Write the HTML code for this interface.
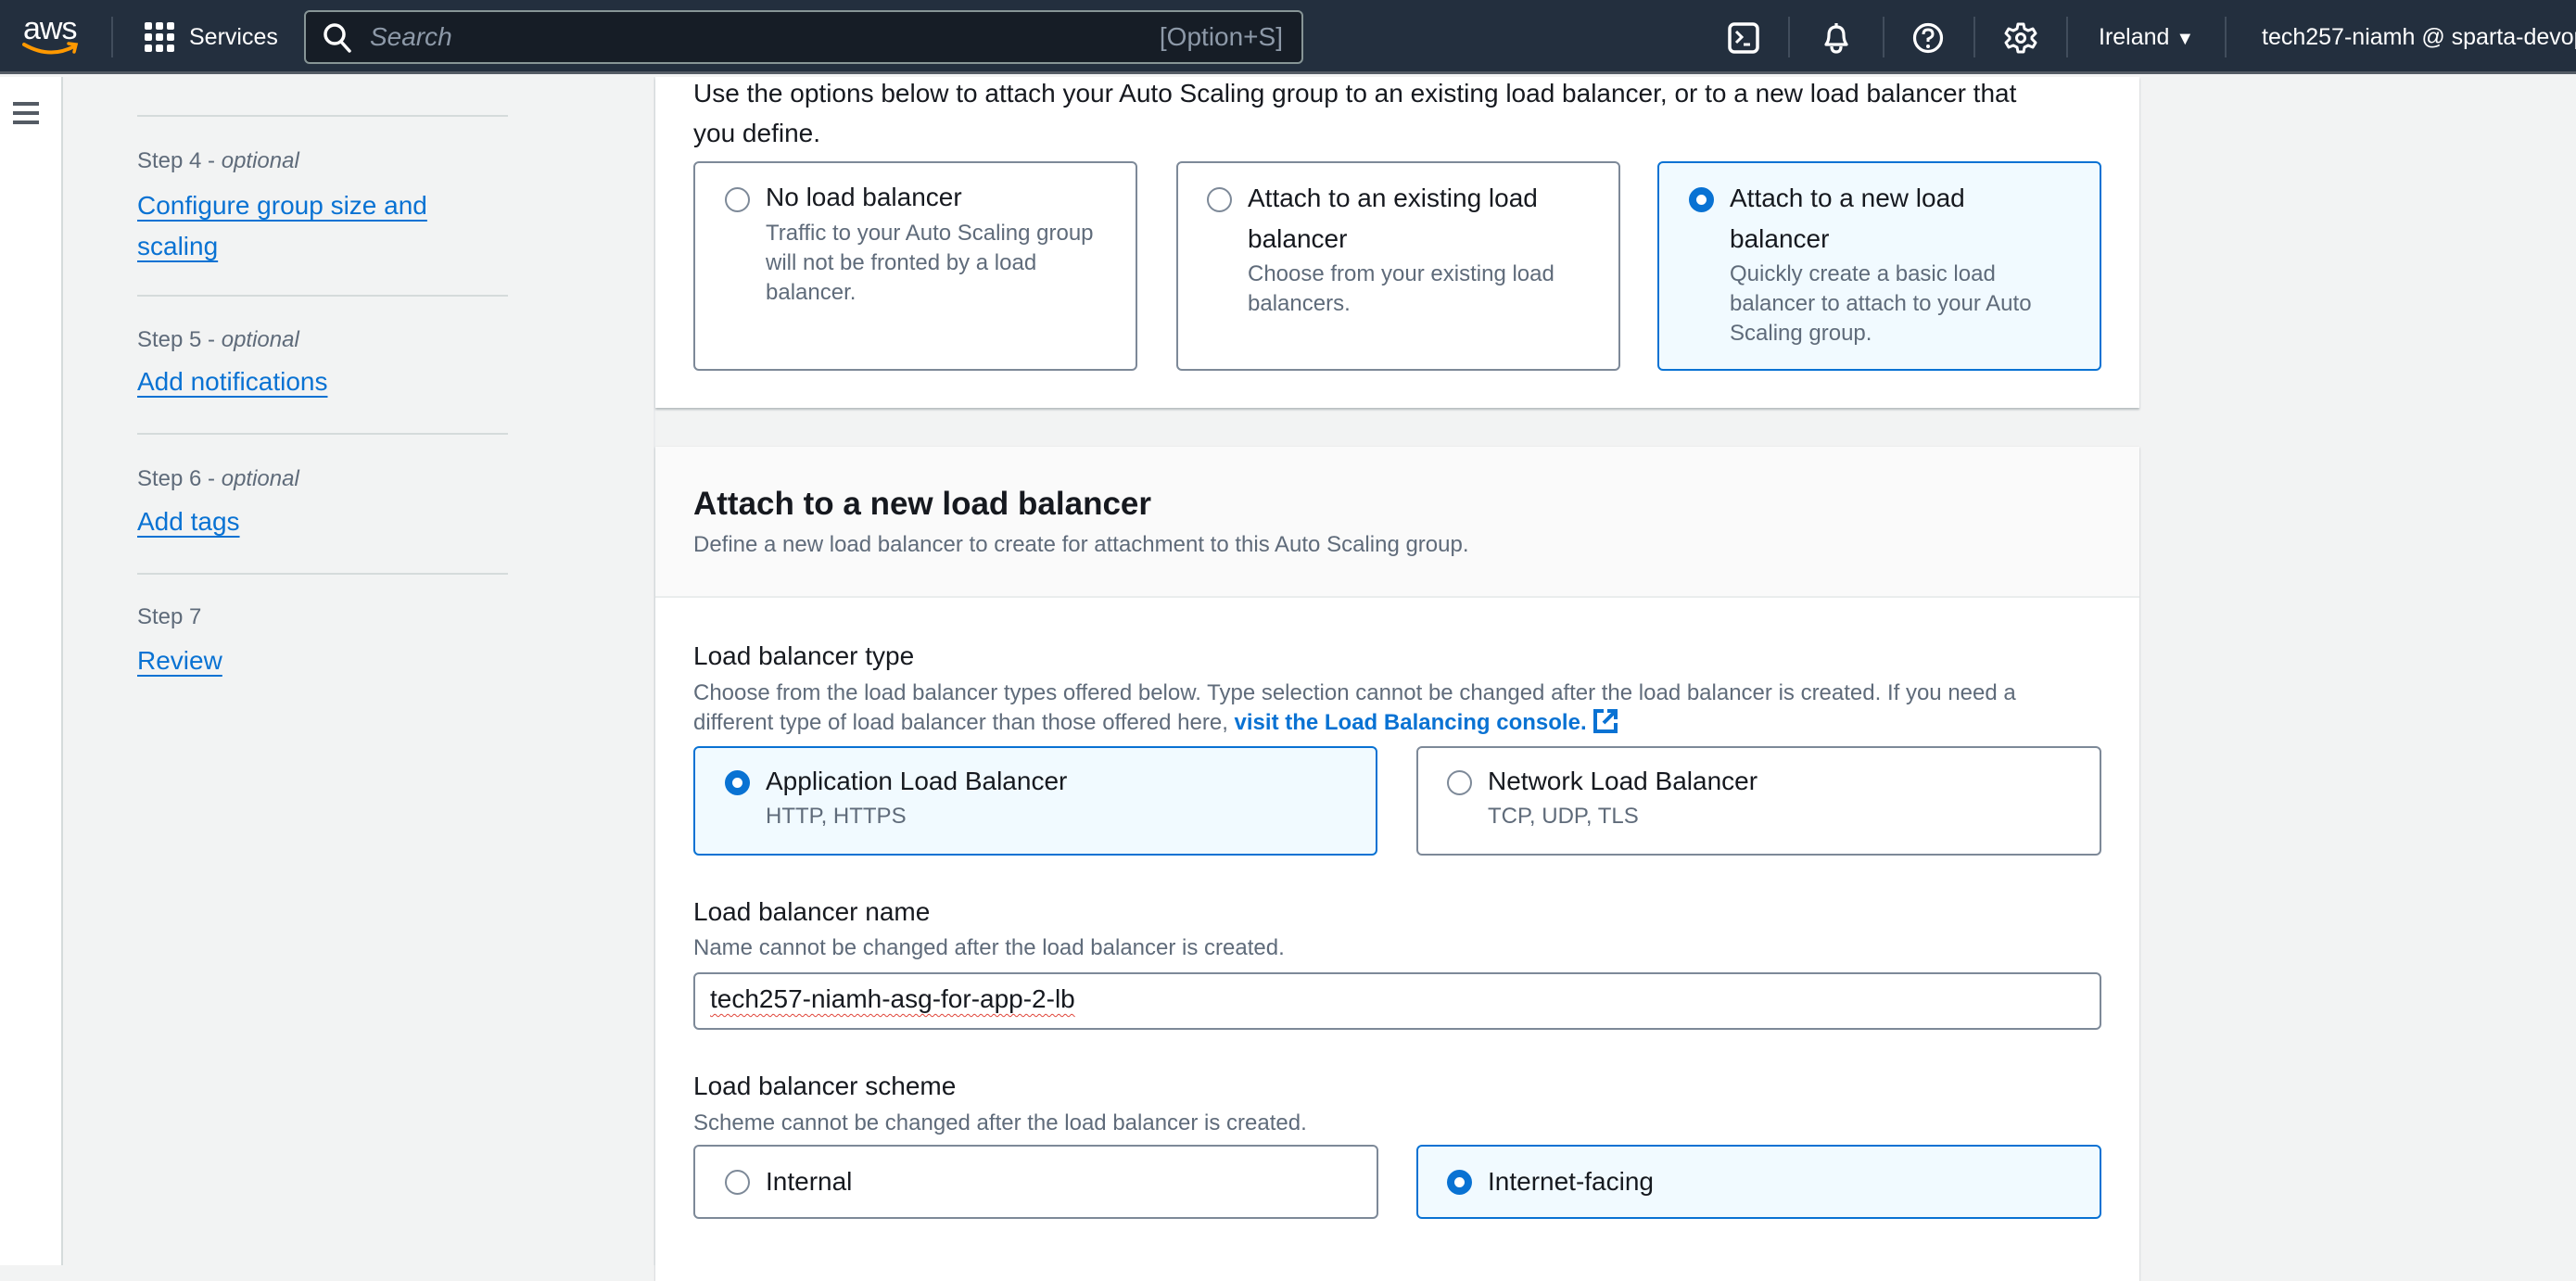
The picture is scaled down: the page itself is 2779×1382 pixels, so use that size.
<!DOCTYPE html>
<html><head><meta charset="utf-8">
<style>
*{margin:0;padding:0;box-sizing:border-box}
body{width:2779px;height:1365px;overflow:hidden;background:#f2f3f3;font-family:"Liberation Sans",sans-serif;position:relative;color:#16191f}
.a{position:absolute;white-space:nowrap}
#hdr{position:absolute;left:0;top:0;width:2779px;height:80px;background:#232f3e;border-bottom:3px solid #545b64}
.sep{position:absolute;top:18px;width:2px;height:44px;background:#414d5c}
.w{color:#fff;font-size:25px}
.tile{position:absolute;border:2px solid #7d8998;border-radius:6px;background:#fff}
.tile.s{border-color:#0972d3;background:#f1faff}
.rad{position:absolute;width:27px;height:27px;border-radius:50%;border:2px solid #7d8998;background:#fff}
.rad.s{border:8px solid #0972d3}
.t{font-size:28px;color:#16191f}
.d{font-size:24px;color:#5f6b7a;line-height:32px}
.lnk{color:#0972d3;font-size:28px;text-decoration:underline;text-decoration-thickness:2px;text-underline-offset:6px}
.stp{font-size:24px;color:#5f6b7a}
.div{position:absolute;left:148px;width:400px;height:2px;background:#d5dbdb}
</style></head><body>
<div id="hdr">
  <div class="a" style="left:25px;top:14px;color:#fff;font-size:34px;letter-spacing:-1px;line-height:34px">aws</div>
  <svg class="a" style="left:24px;top:44px" width="64" height="18" viewBox="0 0 64 18"><path d="M2 4 Q30 20 56 6" stroke="#ff9900" stroke-width="4" fill="none" stroke-linecap="round"/><path d="M50 3 L58 4 L56 12" stroke="#ff9900" stroke-width="3.5" fill="none" stroke-linecap="round"/></svg>
  <div class="sep" style="left:120px"></div>
  <svg class="a" style="left:156px;top:24px" width="32" height="32"><g fill="#fff"><rect x="0" y="0" width="8" height="8" rx="2"/><rect x="12" y="0" width="8" height="8" rx="2"/><rect x="24" y="0" width="8" height="8" rx="2"/><rect x="0" y="12" width="8" height="8" rx="2"/><rect x="12" y="12" width="8" height="8" rx="2"/><rect x="24" y="12" width="8" height="8" rx="2"/><rect x="0" y="24" width="8" height="8" rx="2"/><rect x="12" y="24" width="8" height="8" rx="2"/><rect x="24" y="24" width="8" height="8" rx="2"/></g></svg>
  <div class="a w" style="left:204px;top:25px;line-height:30px">Services</div>
  <div class="a" style="left:328px;top:11px;width:1078px;height:58px;background:#161d26;border:2px solid #879596;border-radius:6px"></div>
  <svg class="a" style="left:348px;top:24px" width="32" height="34"><circle cx="13" cy="13" r="10" stroke="#fff" stroke-width="3.5" fill="none"/><path d="M20 21 L29 31" stroke="#fff" stroke-width="3.5" stroke-linecap="round"/></svg>
  <div class="a" style="left:399px;top:25px;font-size:28px;font-style:italic;color:#8d99a8;line-height:30px">Search</div>
  <div class="a" style="right:1395px;top:25px;font-size:28px;color:#8d99a8;line-height:30px">[Option+S]</div>
  <svg class="a" style="left:1864px;top:24px" width="34" height="34"><rect x="2" y="2" width="30" height="30" rx="5" stroke="#fff" stroke-width="3.5" fill="none"/><path d="M9 10 L15 16 L9 22 M17 24 H24" stroke="#fff" stroke-width="3" fill="none"/></svg>
  <div class="sep" style="left:1929px"></div>
  <svg class="a" style="left:1964px;top:22px" width="34" height="36"><path d="M17 3 V6 M6 26 Q9 22 9 16 Q9 7 17 7 Q25 7 25 16 Q25 22 28 26 Z M12 28 Q12 34 17 34 Q22 34 22 28" stroke="#fff" stroke-width="3.2" fill="none" stroke-linejoin="round"/></svg>
  <div class="sep" style="left:2031px"></div>
  <svg class="a" style="left:2063px;top:24px" width="34" height="34"><circle cx="17" cy="17" r="14.5" stroke="#fff" stroke-width="3.2" fill="none"/><path d="M12 13 Q12 8 17 8 Q22 8 22 13 Q22 16 17 18 V21" stroke="#fff" stroke-width="3" fill="none"/><circle cx="17" cy="26" r="2" fill="#fff"/></svg>
  <div class="sep" style="left:2129px"></div>
  <svg class="a" style="left:2162px;top:23px" width="36" height="36" viewBox="0 0 36 36"><path d="M15 3 H21 L22 8 L26 10 L31 8 L34 13 L30 17 V19 L34 23 L31 28 L26 26 L22 28 L21 33 H15 L14 28 L10 26 L5 28 L2 23 L6 19 V17 L2 13 L5 8 L10 10 L14 8 Z" stroke="#fff" stroke-width="3" fill="none" stroke-linejoin="round"/><circle cx="18" cy="18" r="4.5" stroke="#fff" stroke-width="3" fill="none"/></svg>
  <div class="sep" style="left:2229px"></div>
  <div class="a w" style="left:2264px;top:25px;line-height:30px">Ireland <span style="font-size:20px">▼</span></div>
  <div class="sep" style="left:2400px"></div>
  <div class="a w" style="left:2440px;top:25px;line-height:30px">tech257-niamh @ sparta-devops</div>
</div>

<div class="a" style="left:0;top:83px;width:68px;height:1282px;background:#fff;border-right:2px solid #d5dbdb"></div>
<div class="a" style="left:14px;top:110px;width:28px;height:4px;background:#545b64"></div>
<div class="a" style="left:14px;top:120px;width:28px;height:4px;background:#545b64"></div>
<div class="a" style="left:14px;top:130px;width:28px;height:4px;background:#545b64"></div>

<div class="a" style="left:70px;top:83px;width:637px;height:1282px;background:#f2f3f3;border-right:2px solid #e9ebed"></div>
<div class="div" style="top:124px"></div>
<div class="a stp" style="left:148px;top:160px">Step 4 - <i>optional</i></div>
<div class="a lnk" style="left:148px;top:200px;line-height:44px">Configure group size and<br>scaling</div>
<div class="div" style="top:318px"></div>
<div class="a stp" style="left:148px;top:353px">Step 5 - <i>optional</i></div>
<div class="a lnk" style="left:148px;top:396px">Add notifications</div>
<div class="div" style="top:467px"></div>
<div class="a stp" style="left:148px;top:503px">Step 6 - <i>optional</i></div>
<div class="a lnk" style="left:148px;top:547px">Add tags</div>
<div class="div" style="top:618px"></div>
<div class="a stp" style="left:148px;top:652px">Step 7</div>
<div class="a lnk" style="left:148px;top:697px">Review</div>

<div class="a" style="left:707px;top:83px;width:1601px;height:357px;background:#fff;box-shadow:0 2px 2px rgba(0,28,36,.25)"></div>
<div class="a t" style="left:748px;top:79px;line-height:43px">Use the options below to attach your Auto Scaling group to an existing load balancer, or to a new load balancer that<br>you define.</div>

<div class="tile" style="left:748px;top:174px;width:479px;height:226px"></div>
<div class="rad" style="left:782px;top:202px"></div>
<div class="a t" style="left:826px;top:197px">No load balancer</div>
<div class="a d" style="left:826px;top:236px">Traffic to your Auto Scaling group<br>will not be fronted by a load<br>balancer.</div>

<div class="tile" style="left:1269px;top:174px;width:479px;height:226px"></div>
<div class="rad" style="left:1302px;top:202px"></div>
<div class="a t" style="left:1346px;top:192px;line-height:44px">Attach to an existing load<br>balancer</div>
<div class="a d" style="left:1346px;top:280px">Choose from your existing load<br>balancers.</div>

<div class="tile s" style="left:1788px;top:174px;width:479px;height:226px"></div>
<div class="rad s" style="left:1822px;top:202px"></div>
<div class="a t" style="left:1866px;top:192px;line-height:44px">Attach to a new load<br>balancer</div>
<div class="a d" style="left:1866px;top:280px">Quickly create a basic load<br>balancer to attach to your Auto<br>Scaling group.</div>

<div class="a" style="left:707px;top:482px;width:1601px;height:900px;background:#fff;box-shadow:0 1px 2px rgba(0,28,36,.25)"></div>
<div class="a" style="left:707px;top:482px;width:1601px;height:163px;background:#fafafa;border-bottom:2px solid #eaeded"></div>
<div class="a" style="left:748px;top:523px;font-size:35px;font-weight:bold;line-height:42px">Attach to a new load balancer</div>
<div class="a d" style="left:748px;top:572px">Define a new load balancer to create for attachment to this Auto Scaling group.</div>

<div class="a t" style="left:748px;top:692px">Load balancer type</div>
<div class="a d" style="left:748px;top:732px">Choose from the load balancer types offered below. Type selection cannot be changed after the load balancer is created. If you need a<br>different type of load balancer than those offered here, <span style="color:#0972d3;font-weight:bold">visit the Load Balancing console.</span> <svg width="28" height="28" viewBox="0 0 28 28" style="vertical-align:-5px"><path d="M12 3 H3 V25 H25 V16" stroke="#0972d3" stroke-width="4" fill="none"/><path d="M16 3 H25 V12 M25 3 L12 16" stroke="#0972d3" stroke-width="4" fill="none"/></svg></div>

<div class="tile s" style="left:748px;top:805px;width:738px;height:118px"></div>
<div class="rad s" style="left:782px;top:831px"></div>
<div class="a t" style="left:826px;top:827px">Application Load Balancer</div>
<div class="a d" style="left:826px;top:865px">HTTP, HTTPS</div>

<div class="tile" style="left:1528px;top:805px;width:739px;height:118px"></div>
<div class="rad" style="left:1561px;top:831px"></div>
<div class="a t" style="left:1605px;top:827px">Network Load Balancer</div>
<div class="a d" style="left:1605px;top:865px">TCP, UDP, TLS</div>

<div class="a t" style="left:748px;top:968px">Load balancer name</div>
<div class="a d" style="left:748px;top:1007px">Name cannot be changed after the load balancer is created.</div>
<div class="tile" style="left:748px;top:1049px;width:1519px;height:62px"></div>
<div class="a t" style="left:766px;top:1062px;text-decoration:underline wavy #e0453a;text-decoration-thickness:1px;text-underline-offset:6px">tech257-niamh-asg-for-app-2-lb</div>

<div class="a t" style="left:748px;top:1156px">Load balancer scheme</div>
<div class="a d" style="left:748px;top:1196px">Scheme cannot be changed after the load balancer is created.</div>

<div class="tile" style="left:748px;top:1235px;width:739px;height:80px"></div>
<div class="rad" style="left:782px;top:1262px"></div>
<div class="a t" style="left:826px;top:1259px">Internal</div>

<div class="tile s" style="left:1528px;top:1235px;width:739px;height:80px"></div>
<div class="rad s" style="left:1561px;top:1262px"></div>
<div class="a t" style="left:1605px;top:1259px">Internet-facing</div>
</body></html>
